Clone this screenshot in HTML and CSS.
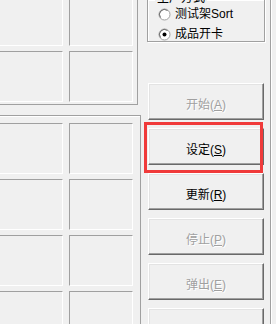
FILE: index.html
```html
<!DOCTYPE html>
<html>
<head>
<meta charset="utf-8">
<link rel="stylesheet" href="styles.css">
</head>
<body>
<div class="win">
  <div class="left">
    <div class="panel upper">
      <div class="grid">
        <div class="cell"></div><div class="cell"></div>
        <div class="cell"></div><div class="cell"></div>
      </div>
    </div>
    <div class="panel lower">
      <div class="grid">
        <div class="cell"></div><div class="cell"></div>
        <div class="cell"></div><div class="cell"></div>
        <div class="cell"></div><div class="cell"></div>
        <div class="cell"></div><div class="cell"></div>
      </div>
    </div>
  </div>
  <div class="right">
    <div class="group">
      <span class="group-title">生产方式</span>
      <label class="radio">
        <svg class="radio-icon" width="13" height="13" viewBox="0 0 13 13">
          <circle cx="6.5" cy="6.5" r="5.5" fill="#fff" stroke="#a0a0a0"/>
          <path d="M2.5 9.5 A5 5 0 0 1 9.5 2.5" fill="none" stroke="#696969"/>
        </svg>
        <span>测试架<span class="latin">Sort</span></span>
      </label>
      <label class="radio">
        <svg class="radio-icon" width="13" height="13" viewBox="0 0 13 13">
          <circle cx="6.5" cy="6.5" r="5.5" fill="#fff" stroke="#a0a0a0"/>
          <path d="M2.5 9.5 A5 5 0 0 1 9.5 2.5" fill="none" stroke="#696969"/>
          <circle cx="6.5" cy="6.5" r="2" fill="#000"/>
        </svg>
        <span>成品开卡</span>
      </label>
    </div>
    <div class="buttons">
      <button class="btn" disabled>开始(<u>A</u>)</button>
      <button class="btn">设定(<u>S</u>)</button>
      <button class="btn">更新(<u>R</u>)</button>
      <button class="btn" disabled>停止(<u>P</u>)</button>
      <button class="btn" disabled>弹出(<u>E</u>)</button>
      <button class="btn"></button>
    </div>
  </div>
  <div class="highlight"></div>
</div>
</body>
</html>
```
FILE: styles.css
```css
html, body {
  margin: 0;
  padding: 0;
  background: #f0f0f0;
}
body {
  width: 276px;
  height: 324px;
  overflow: hidden;
  font-family: "Liberation Sans", "Noto Sans CJK SC", sans-serif;
  font-size: 12px;
  color: #000;
}
.win {
  position: relative;
  display: flex;
  width: 276px;
  height: 324px;
  overflow: hidden;
}
.left {
  width: 141px;
  flex: none;
  display: flex;
  flex-direction: column;
}
.panel.upper {
  height: 104px;
  width: 137px;
  border-right: 1px solid #a0a0a0;
  border-bottom: 1px solid #a0a0a0;
  overflow: hidden;
}
.panel.upper .grid {
  margin-top: -5px;
  margin-left: -1px;
}
.panel.lower {
  margin-top: 10px;
  flex: 1;
  border-top: 1px solid #a0a0a0;
  border-right: 1px solid #a0a0a0;
  box-shadow: inset 0 1px 0 #fff;
  overflow: hidden;
}
.panel.lower .grid {
  margin-top: 7px;
  margin-left: -1px;
}
.grid {
  display: grid;
  grid-template-columns: 64px 64px;
  column-gap: 6px;
  row-gap: 5px;
}
.cell {
  height: 51px;
  box-sizing: border-box;
  border-top: 1px solid #a0a0a0;
  border-left: 1px solid #a0a0a0;
  border-bottom: 1px solid #fff;
  border-right: 1px solid #fff;
}
.right {
  flex: none;
  display: flex;
  flex-direction: column;
  padding-left: 6px;
  border-right: 1px solid #a0a0a0;
  box-shadow: 1px 0 0 #fff;
  box-sizing: border-box;
  width: 130px;
}
.group {
  position: relative;
  margin-top: -1px;
  width: 118px;
  border: 1px solid #a0a0a0;
  box-shadow: inset 1px 1px 0 #fff, 1px 1px 0 #fff;
  display: flex;
  flex-direction: column;
  padding: 8px 0 0 10px;
  box-sizing: border-box;
  height: 47px;
  gap: 7px;
}
.group-title {
  position: absolute;
  left: 7px;
  top: -8px;
  padding: 0 2px;
  background: #f0f0f0;
  line-height: 12px;
}
.radio {
  display: flex;
  align-items: center;
  gap: 4px;
  height: 13px;
  line-height: 13px;
}
.radio-icon {
  flex: none;
}
.buttons {
  margin-top: 41px;
  display: flex;
  flex-direction: column;
  gap: 8px;
  padding-left: 1px;
}
.btn {
  width: 116px;
  height: 37px;
  flex: none;
  margin: 0;
  padding: 3px 0 0 0;
  box-sizing: border-box;
  background: #f0f0f0;
  border-top: 1px solid #fff;
  border-left: 1px solid #fff;
  border-right: 1px solid #696969;
  border-bottom: 1px solid #696969;
  box-shadow: inset -1px -1px 0 #a0a0a0, inset 1px 1px 0 #e3e3e3;
  font-family: "Liberation Sans", "Noto Sans CJK SC", sans-serif;
  font-size: 12px;
  color: #000;
}
.btn:disabled {
  color: #a0a0a0;
  text-shadow: 1px 1px 0 #fff;
}
.highlight {
  position: absolute;
  left: 144px;
  top: 122px;
  width: 119px;
  height: 51px;
  box-sizing: border-box;
  border: 3px solid #f03a3a;
}
```
